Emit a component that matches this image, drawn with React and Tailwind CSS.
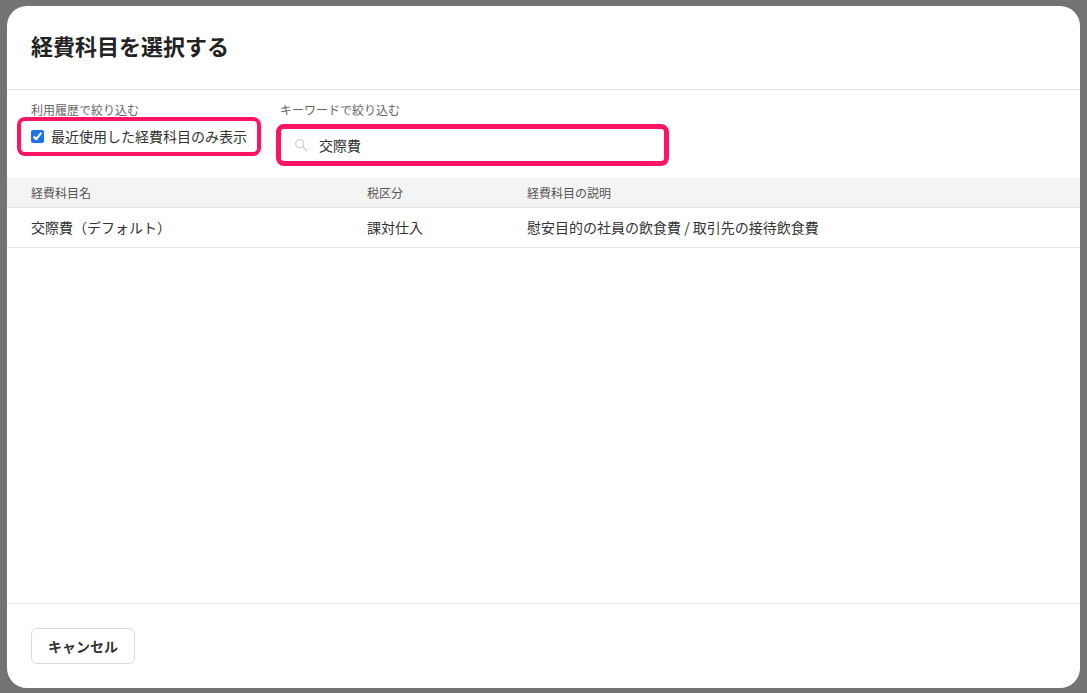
export default function App() {
  return (
    <div className="h-[693px] w-[1087px] bg-[#737373] pt-[6px] pl-[7px] overflow-hidden" style={{ fontFamily: '"Noto Sans CJK JP", "Noto Sans", sans-serif' }}>
      <div className="w-[1073px] h-[682px] bg-white rounded-[20px] flex flex-col overflow-hidden text-[#333]">
        <div className="h-[84px] border-b border-[#e5e5e5] flex items-center px-[24px] pb-[4px] shrink-0">
          <h1 className="text-[22px] font-bold text-[#222]">経費科目を選択する</h1>
        </div>
        <div className="flex gap-[15px] px-[10px] pt-[10px] h-[88px] shrink-0">
          <div className="flex flex-col">
            <div className="text-[12px] text-[#666] pl-[14px] leading-[20px]">利用履歴で絞り込む</div>
            <label className="mt-[-3px] w-[244px] h-[39px] border-[4px] border-[#ff1463] rounded-[8px] flex items-center gap-[7px] px-[10px] text-[14px] text-[#333]">
              <input type="checkbox" defaultChecked className="w-[13px] h-[13px] accent-[#1a73e8]" />
              最近使用した経費科目のみ表示
            </label>
          </div>
          <div className="flex flex-col">
            <div className="text-[12px] text-[#666] pl-[4px] leading-[20px]">キーワードで絞り込む</div>
            <div className="mt-[4px] w-[393px] h-[42px] border-[5px] border-[#ff1463] rounded-[8px] flex items-center gap-[10px] px-[12px] text-[14px] text-[#333]">
              <svg width="16" height="16" viewBox="0 0 24 24" fill="none" stroke="#d0d0d0" strokeWidth="2"><circle cx="10" cy="10" r="6" /><path d="M15 15l6 6" /></svg>
              交際費
            </div>
          </div>
        </div>
        <div className="flex items-center h-[30px] bg-[#f5f4f5] border-b border-[#e5e5e5] text-[12px] text-[#555] px-[24px] shrink-0">
          <div className="w-[336px]">経費科目名</div>
          <div className="w-[160px]">税区分</div>
          <div>経費科目の説明</div>
        </div>
        <div className="flex items-center h-[40px] border-b border-[#e5e5e5] text-[14px] text-[#333] px-[24px] shrink-0">
          <div className="w-[336px]">交際費（デフォルト）</div>
          <div className="w-[160px]">課対仕入</div>
          <div>慰安目的の社員の飲食費 / 取引先の接待飲食費</div>
        </div>
        <div className="flex-1" />
        <div className="h-[85px] border-t border-[#e5e5e5] flex items-center px-[24px] shrink-0">
          <button className="h-[36px] px-[16px] rounded-[6px] border border-[#dcdcdc] bg-white text-[14px] font-bold text-[#333]">キャンセル</button>
        </div>
      </div>
    </div>
  );
}
